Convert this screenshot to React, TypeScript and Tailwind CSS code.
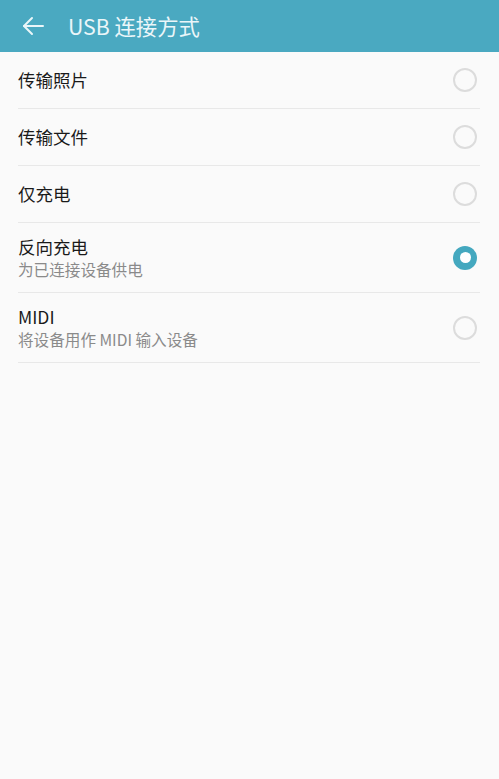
import React from "react";

const items = [
  { title: "传输照片", sub: "", selected: false },
  { title: "传输文件", sub: "", selected: false },
  { title: "仅充电", sub: "", selected: false },
  { title: "反向充电", sub: "为已连接设备供电", selected: true },
  { title: "MIDI", sub: "将设备用作 MIDI 输入设备", selected: false },
];

function Radio({ selected }: { selected: boolean }) {
  if (selected) {
    return (
      <div className="w-[24px] h-[24px] rounded-full bg-[#44a8bf] flex items-center justify-center">
        <div className="w-[11px] h-[11px] rounded-full bg-white" />
      </div>
    );
  }
  return <div className="w-[24px] h-[24px] rounded-full border-[2px] border-[#dcdcdc]" />;
}

export default function App() {
  return (
    <div
      className="w-[499px] h-[779px] bg-[#fafafa] flex flex-col"
      style={{ fontFamily: '"Noto Sans CJK SC", "Noto Sans", sans-serif' }}
    >
      <div className="h-[52px] bg-[#4aa9c1] flex items-center pl-[22px] shrink-0">
        <svg width="22" height="20" viewBox="0 0 22 20" fill="none" stroke="#eaf6f9" strokeWidth="2" strokeLinecap="round" strokeLinejoin="round">
          <path d="M21 10H2" />
          <path d="M10 2L2 10L10 18" />
        </svg>
        <span className="ml-[24px] text-[21.3px] text-[#eaf6f9] leading-none">USB 连接方式</span>
      </div>
      <div className="pl-[18px] pr-[19px]">
        {items.map((it) => (
          <div
            key={it.title}
            className={`flex items-center justify-between border-b border-[#e8e8e8] ${it.sub ? "h-[70px]" : "h-[57px]"}`}
          >
            <div className="flex flex-col">
              <span className="text-[17.5px] text-[#1a1a1a] leading-[22px]">{it.title}</span>
              {it.sub && (
                <span className="text-[15.6px] text-[#8a8a8a] leading-[20px] mt-[1px]">{it.sub}</span>
              )}
            </div>
            <div className="mr-[3px]">
              <Radio selected={it.selected} />
            </div>
          </div>
        ))}
      </div>
    </div>
  );
}
